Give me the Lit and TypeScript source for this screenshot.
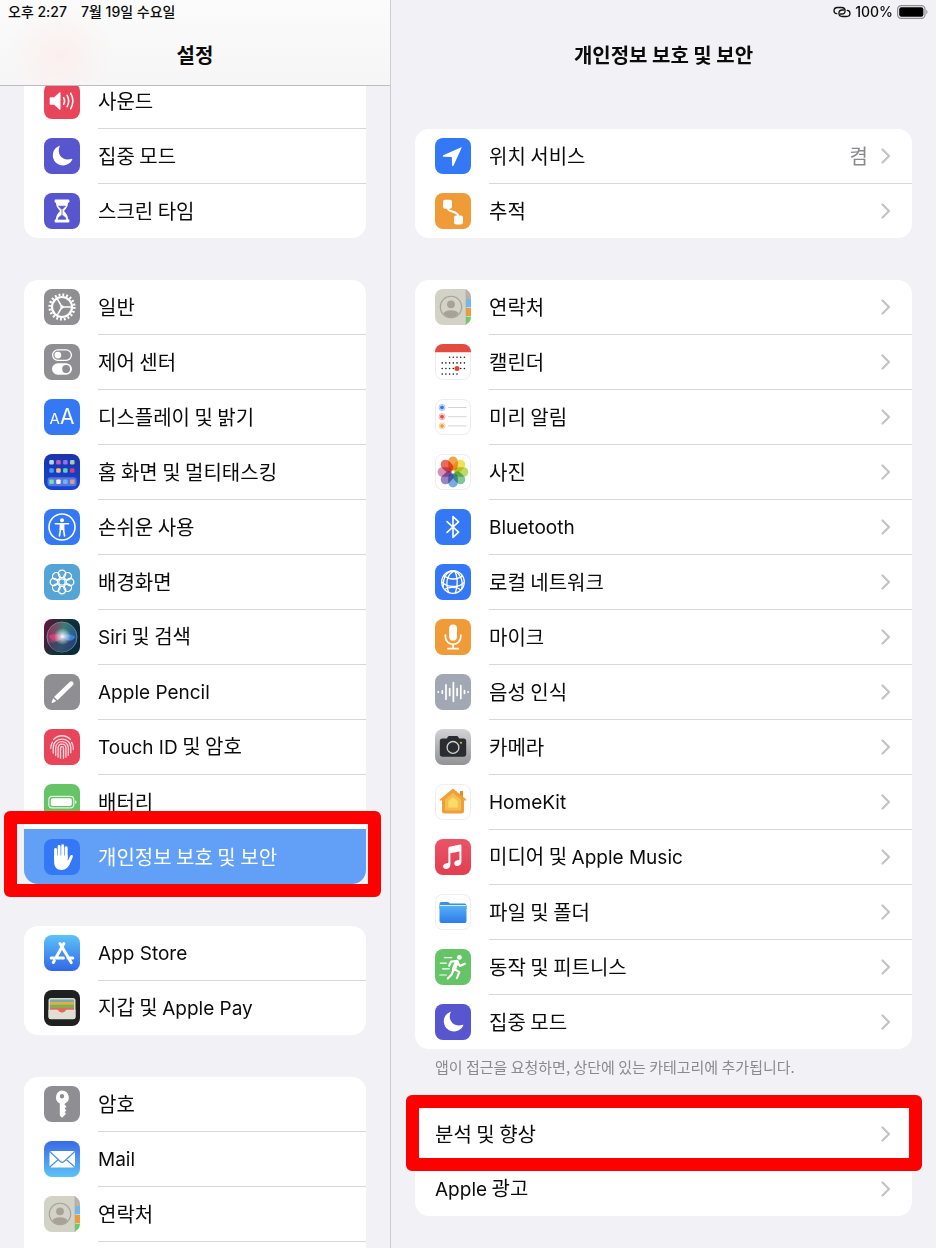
import { LitElement, html, svg, css, nothing } from "lit";
import type { SVGTemplateResult, TemplateResult } from "lit";
import { customElement, property } from "lit/decorators.js";
import { classMap } from "lit/directives/class-map.js";

const BLUE = "#3478f6";
const GRAY = "#8e8e93";
const RED = "#e8455a";
const ORANGE = "#ef9b38";
const GREEN = "#65c466";
const INDIGO = "#5856ce";

const tile = (fill: string) => svg`<rect width="36" height="36" rx="8" fill=${fill}></rect>`;
const whiteTile = svg`<rect x=".5" y=".5" width="35" height="35" rx="7.5" fill="#fff" stroke="#ededf0"></rect>`;

const gradient = (id: string, from: string, to: string) => svg`
  <defs><linearGradient id=${id} x1="0" y1="0" x2="0" y2="1">
    <stop offset="0" stop-color=${from}></stop><stop offset="1" stop-color=${to}></stop>
  </linearGradient></defs>`;

const around = (count: number, draw: (angle: number, index: number) => SVGTemplateResult) =>
  Array.from({ length: count }, (_, i) => draw((360 / count) * i, i));

const calendarDots = () => {
  const dots: SVGTemplateResult[] = [];
  for (let row = 0; row < 4; row++) {
    for (let col = 0; col < 7; col++) {
      if ((row === 0 && col < 2) || (row === 3 && col > 4)) continue;
      dots.push(svg`<circle cx=${7.2 + col * 3.7} cy=${13.3 + row * 5.6} r=".8" fill="#222"></circle>`);
    }
  }
  return dots;
};

const homeColors = [
  ["#bcd6f7", "#c05fae", "#9a6cf0", "#a9c9a0"],
  ["#3f9df5", "#f0c184", "#5fd0c0", "#d23c78"],
  ["#78dcb4", "#f4f4f8", "#6fb4f7", "#d79c8e"],
];
const petalColors = ["#f2962e", "#f3dc3a", "#b4d453", "#6cc08b", "#6a9fe0", "#8a72bd", "#cf7fb0", "#e85448"];

const icons: Record<string, SVGTemplateResult> = {
  sound: svg`${tile(RED)}
    <path d="M6.500 14.200h3.600l5.300-4.700c.6-.5 1.100-.3 1.100.4v16.200c0 .7-.5.9-1.100.4l-5.300-4.700H6.500c-.5 0-.8-.3-.8-.8v-6c0-.5.3-.8.8-.8z" fill="#fff"></path>
    <path d="M19.600 14.600q2 3.400 0 6.800M23.100 12.400q3.200 5.600 0 11.200M26.600 10.200q4.600 7.800 0 15.600" fill="none" stroke="#fff" stroke-width="1.500" stroke-linecap="round"></path>`,
  moon: svg`${tile(INDIGO)}
    <path d="M15.600 8.500c.4-.4 0-.9-.6-.6A10.200 10.200 0 1 0 28.300 21.500c.2-.6-.3-1-.8-.7-7.600 3.200-15.400-3.900-11.900-12.300z" fill="#fff"></path>`,
  hourglass: svg`${tile(INDIGO)}
    <path d="M11.600 6.500h12.800a1 1 0 0 1 1 1v1.300a1 1 0 0 1-1 1h-.3c-.3 4-2 6-4.100 8.200 2.100 2.200 3.800 4.200 4.100 8.200h.3a1 1 0 0 1 1 1v1.300a1 1 0 0 1-1 1H11.600a1 1 0 0 1-1-1v-1.300a1 1 0 0 1 1-1h.3c.3-4 2-6 4.100-8.200-2.100-2.200-3.800-4.200-4.100-8.200h-.3a1 1 0 0 1-1-1V7.500a1 1 0 0 1 1-1z" fill="#fff"></path>
    <path d="M14.600 13.200h6.800L18 16.600zM18 17v5.500M14 26.200c.6-2.300 2.300-3.300 4-3.700 1.700.4 3.400 1.400 4 3.700z" fill=${INDIGO} stroke=${INDIGO} stroke-width=".8"></path>`,
  gear: svg`${tile(GRAY)}
    <circle cx="18" cy="18" r="12.300" fill="none" stroke="#fff" stroke-width="2.600" stroke-dasharray="1.900 1.964"></circle>
    <circle cx="18" cy="18" r="10" fill="none" stroke="#fff" stroke-width="2.200"></circle>
    <path d="M18 18h9M18 18l-4.600-7.900M18 18l-4.600 7.900" stroke="#fff" stroke-width="1.500"></path>
    <circle cx="18" cy="18" r="1.700" fill="#fff"></circle>`,
  toggles: svg`${tile(GRAY)}
    <rect x="8.600" y="5.900" width="18.800" height="10.400" rx="5.200" fill="none" stroke="#fff" stroke-width="1.300"></rect>
    <circle cx="13.900" cy="11.100" r="3.400" fill="#fff"></circle>
    <rect x="8" y="19.200" width="20" height="11.600" rx="5.800" fill="#fff"></rect>
    <circle cx="22.100" cy="25" r="3.900" fill=${GRAY}></circle>`,
  display: svg`${tile(BLUE)}
    <text class="glyph" x="5.500" y="25.200" font-size="15">A</text><text class="glyph" x="16" y="25.200" font-size="21">A</text>`,
  home: svg`${gradient("g-home", "#1b33a8", "#1746d8")}${tile("url(#g-home)")}
    <rect x="3.500" y="23.200" width="29" height="9" rx="3" fill="#fff" opacity=".28"></rect>
    ${homeColors.map((row, y) => row.map((c, x) => svg`<rect x=${5.3 + x * 6.9} y=${[6, 14.3, 25.4][y]} width="4.500" height="4.500" rx="1.200" fill=${c}></rect>`))}`,
  accessibility: svg`${tile(BLUE)}
    <circle cx="18" cy="18" r="13" fill="none" stroke="#fff" stroke-width="1.600"></circle>
    <circle cx="18" cy="11.200" r="2" fill="#fff"></circle>
    <path d="M11.400 14.800h13.200M16.700 19.500l-1.300 7.500M19.300 19.500l1.300 7.500" fill="none" stroke="#fff" stroke-width="1.600" stroke-linecap="round"></path>
    <path d="M15.600 14.500h4.800v6.500h-4.800z" fill="#fff"></path>`,
  wallpaper: svg`${tile("#55a4d6")}
    <g fill="none" stroke="#fff" stroke-width="1.300">
      ${around(8, (a) => svg`<circle cx="18" cy="9.900" r="3.700" transform="rotate(${a} 18 18)"></circle>`)}
      ${around(8, (a) => svg`<path d="M18 14v-2.500" transform="rotate(${a + 22.5} 18 18)"></path>`)}
      <circle cx="18" cy="18" r="3.200"></circle>
    </g>`,
  siri: svg`<defs>
      <linearGradient id="g-siri" x1="0" y1="0" x2="1" y2=".4"><stop offset="0" stop-color="#6b1440"></stop><stop offset=".55" stop-color="#123334"></stop><stop offset="1" stop-color="#0b2a3c"></stop></linearGradient>
      <linearGradient id="g-orb" x1="0" y1=".4" x2="1" y2=".6"><stop offset="0" stop-color="#c92a68"></stop><stop offset=".5" stop-color="#4d9c90"></stop><stop offset="1" stop-color="#2468c8"></stop></linearGradient>
      <radialGradient id="g-glow"><stop offset="0" stop-color="#fff"></stop><stop offset=".3" stop-color="#e8f4ff" stop-opacity=".7"></stop><stop offset="1" stop-color="#fff" stop-opacity="0"></stop></radialGradient>
    </defs>${tile("url(#g-siri)")}
    <circle cx="18" cy="18" r="15" fill="url(#g-orb)" opacity=".7" stroke="#9aa8b4" stroke-width="1"></circle>
    <path d="M5 23c5 2 9-1 14-4 5-2 9-1 13 1-1 7-7 13-14 13S6 29 5 23z" fill="#252c60" opacity=".5"></path>
    <path d="M5 17c5-4 10-2 14 1-3 5-11 6-14-1z" fill="#e0417f" opacity=".75"></path>
    <path d="M31 18c-4-4-9-3-12-1 3 5 9 7 12 1z" fill="#4a92e8" opacity=".75"></path>
    <circle cx="18.500" cy="17.500" r="8.500" fill="url(#g-glow)"></circle>`,
  pencil: svg`${tile(GRAY)}
    <path d="M26.200 7.600a2.300 2.300 0 0 1 3.100 3.200L13.500 26.300l-3.500-3.200z" fill="#fff"></path>
    <path d="M9.100 24.200l3.200 2.900-3.700 1.900c-.7.3-1.200-.2-.9-.9z" fill="#fff"></path>`,
  touch: svg`${tile(RED)}
    <g fill="none" stroke="#fbd9de" stroke-width="1.300" stroke-linecap="round">
      <path d="M9.500 10.500c4.600-5 12.400-5 17 0M6.700 19.500c0-2.600.6-4.600 1.700-6.200"></path>
      <path d="M9.200 24v-5.200c0-11.600 17.600-11.600 17.600 0v5M29.300 20.500c.1-3-.4-5.300-1.700-7.200"></path>
      <path d="M11.700 26.400v-7.300c0-8.600 12.600-8.600 12.600 0v7.300"></path>
      <path d="M14.100 28.200v-9c0-5.400 7.800-5.400 7.800 0v9"></path>
      <path d="M16.500 29.300V19.200c0-2 3-2 3 0v10.100"></path>
    </g>`,
  battery: svg`${tile(GREEN)}
    <rect x="4.800" y="12.300" width="25" height="11.600" rx="3.400" fill="none" stroke="#fff" stroke-width="1.200" opacity=".8"></rect>
    <rect x="6.800" y="14.200" width="21" height="7.800" rx="1.800" fill="#fff"></rect>
    <path d="M31.200 16.200c1.700.7 1.700 3.100 0 3.800z" fill="#fff"></path>`,
  hand: svg`${tile(BLUE)}
    <path d="M11.600 20V10.400M15.100 18V7.400M18.700 18V6.800M22.200 19V8.800" stroke="#fff" stroke-width="2.900" stroke-linecap="round"></path>
    <path d="M10.150 16.500h13.500v5.200c1.300-1.600 1.700-3.900 2.800-5.200.8-.9 2.600-.4 2.400.9-.2 1.500-1.700 4.100-2.700 6.700-1.500 4.200-4.200 6.900-8.600 6.900-5 0-7.400-3.400-7.400-8z" fill="#fff"></path>`,
  appstore: svg`${gradient("g-store", "#5cc2f8", "#3267e8")}${tile("url(#g-store)")}
    <g fill="none" stroke="#fff" stroke-width="3" stroke-linecap="round">
      <path d="M19.900 8.600l-7.300 12.900M16 8.600l11.200 19M7.200 23h12.200M24 23h4.800M10.300 25.700l-1 1.800"></path>
    </g>`,
  wallet: svg`${tile("#1f2120")}
    <rect x="4.500" y="8" width="27" height="21" rx="2.500" fill="#d9d7cc"></rect>
    <rect x="6" y="9.600" width="24" height="7" rx="1.400" fill="#7aa9b5"></rect>
    <rect x="6" y="12" width="24" height="6" fill="#dcb23f"></rect>
    <rect x="6" y="14.700" width="24" height="5" fill="#86ab55"></rect>
    <path d="M6 18h24v2h-6.500c-1.300 0-1.700.5-2.300 1.300-1.500 2-4.900 2-6.400 0-.6-.8-1-1.300-2.300-1.300H6z" fill="#e4695c"></path>
    <path d="M4.500 19.800h7.800c1.300 0 1.800.5 2.500 1.400 1.500 1.900 4.900 1.900 6.400 0 .7-.9 1.200-1.400 2.500-1.400h7.800v7a2.500 2.500 0 0 1-2.500 2.500H7a2.500 2.500 0 0 1-2.500-2.500z" fill="#e1ded3"></path>`,
  key: svg`${tile(GRAY)}
    <path fill-rule="evenodd" d="M18 4.600a6.900 6.900 0 0 1 2.700 13.200v.9l1.800 1.800-1.800 2.100 1.600 1.700-1.600 1.900 1.300 1.600-3.300 3.400c-.4.4-.8.4-1.200 0l-1.700-1.800V17.600A6.900 6.900 0 0 1 18 4.600zm0 3.400a2.200 2.200 0 1 0 0 4.400 2.200 2.200 0 0 0 0-4.400z" fill="#fff"></path>`,
  mail: svg`${gradient("g-mail", "#3a6ae6", "#5cc3f7")}${tile("url(#g-mail)")}
    <rect x="5.500" y="10" width="25.500" height="16.500" rx="2" fill="#fff"></rect>
    <path d="M6 10.800l10.300 9.700c1.100 1 2.700 1 3.800 0L30.500 10.800M6 25.800l8.300-7.300M30.500 25.800l-8.300-7.300" fill="none" stroke="#4b90ee" stroke-width="1.200"></path>`,
  contacts: svg`
    <path d="M28 0a8 8 0 0 1 8 8v2H29V0z" fill="#b5b3ab"></path>
    <path d="M29 10h7v8.500h-7z" fill="#6fb7ec"></path><path d="M29 19h7v8h-7z" fill="#ef9a38"></path>
    <path d="M29 27.500h7V28a8 8 0 0 1-7 8z" fill="#68cb6c"></path>
    <path d="M8 0h23v36H8a8 8 0 0 1-8-8V8a8 8 0 0 1 8-8z" fill="#d3d2c6"></path>
    <circle cx="16" cy="18" r="10.700" fill="none" stroke="#a6a297" stroke-width="1.100"></circle>
    <circle cx="16" cy="15.300" r="3.900" fill="#a6a297"></circle>
    <path d="M8.200 24.600c1.600-2.600 4.500-3.300 7.800-3.300s6.200.7 7.800 3.300c-3.600 4.800-12 4.800-15.600 0z" fill="#a6a297"></path>
    <path d="M31 0v36" stroke="#a9a89e" stroke-width=".6"></path>`,
  location: svg`${tile(BLUE)}<path d="M26.300 9.300L8.300 17.200c-.9.400-.8 1.400.2 1.500l8.300.3.300 8.300c.1 1 1.200 1.200 1.500.2l8-17.700c.2-.5-.1-.7-.3-.5z" fill="#fff"></path>`,
  tracking: svg`${tile(ORANGE)}
    <rect x="8" y="6.700" width="9" height="9" rx="2.200" fill="#fff"></rect>
    <rect x="19" y="22.500" width="9" height="9" rx="2.200" fill="#fff"></rect>
    <path d="M12.600 15c.2 4.500 9.600 2.500 10.800 8" fill="none" stroke="#fff" stroke-width="2"></path>`,
  calendar: svg`${whiteTile}<path d="M8 0h20a8 8 0 0 1 8 8v.3H0V8a8 8 0 0 1 8-8z" fill="#e34b40"></path>
    ${calendarDots()}<circle cx="22" cy="24.500" r="2.500" fill="#e0453c"></circle>`,
  reminders: svg`${whiteTile}
    ${[BLUE, "#e0504a", "#eda03f"].map((c, i) => svg`
      <circle cx="7" cy=${8.5 + i * 9.2} r="3" fill="none" stroke=${c} stroke-width=".8" opacity=".6"></circle>
      <circle cx="7" cy=${8.5 + i * 9.2} r="2" fill=${c}></circle>
      <path d="M13 ${8.5 + i * 9.2}h18.500" stroke="#c9c9cd" stroke-width=".8"></path>`)}`,
  photos: svg`${whiteTile}
    ${petalColors.map((c, i) => svg`<rect class="petal" x="13.200" y="2.600" width="9.600" height="14" rx="4.800" fill=${c} opacity=".88" transform="rotate(${i * 45} 18 18)"></rect>`)}`,
  bluetooth: svg`${tile(BLUE)}
    <path d="M12 12.600l11.600 10.600L18 28.400V7.600l5.600 5.200L12 23.400" fill="none" stroke="#fff" stroke-width="1.600" stroke-linecap="round" stroke-linejoin="round"></path>`,
  network: svg`${tile(BLUE)}
    <g fill="none" stroke="#fff" stroke-width="1.300">
      <circle cx="18" cy="18" r="11.300"></circle>
      <path d="M19.500 6.800c-8 3.400-9.500 13.700-5.500 22M19.500 6.800c3 4.500 4 14 .8 22.400M19.500 6.800C24 9 29 15 26.500 25.300M19.500 6.800C12 7 8 13 8.200 23"></path>
      <path d="M9 11.500c5 4.500 13.500 4.700 18.400.3M6.700 18c6 5.800 16.500 6 22.500.4M9.500 25.500c4-2.800 12.500-2.800 16.600.4"></path>
    </g>`,
  mic: svg`${tile(ORANGE)}
    <rect x="14.200" y="5.600" width="7.800" height="16" rx="3.900" fill="#fff"></rect>
    <path d="M10.400 16v1.600c0 10.200 15.400 10.200 15.400 0V16M18.100 25.400v4M13 29.700h10.200" fill="none" stroke="#fff" stroke-width="1.700" stroke-linecap="round"></path>`,
  speech: svg`${tile("#a2a8b3")}
    <path d="M3.300 17.800v.4M7.300 16.800v2.400M11 10.800v14.400M14.700 14.600v6.800M18.400 8.700v18.600M22.100 14.600v6.800M25.800 11.600v12.800M29.500 16.600v2.800M33.100 17.800v.4" stroke="#fff" stroke-width="1.700" stroke-linecap="round"></path>`,
  camera: svg`${gradient("g-cam", "#d3d3d5", "#929297")}${tile("url(#g-cam)")}
    <path d="M7.500 9.600H12c.6-2 1.400-2.600 2.800-2.600h6.400c1.400 0 2.200.6 2.800 2.600h4.500A2.700 2.700 0 0 1 31.200 12.300V25a2.700 2.700 0 0 1-2.700 2.700h-21A2.700 2.700 0 0 1 4.800 25V12.300a2.700 2.700 0 0 1 2.700-2.700z" fill="#2b2c2f"></path>
    <circle cx="18" cy="18.400" r="5.900" fill="none" stroke="#d0d0d2" stroke-width="1.300"></circle>
    <circle cx="26" cy="13.800" r="1" fill="#e9c745"></circle>`,
  homekit: svg`${whiteTile}
    <path d="M24.800 7h3.200v7h-3.200z" fill="#e08a34"></path>
    <path d="M18 4.500l13 10.700c.7.600.3 1.400-.4 1.400H29V27a2.500 2.500 0 0 1-2.500 2.500h-17A2.500 2.500 0 0 1 7 27V16.600H5.400c-.7 0-1.100-.8-.4-1.400z" fill="#ee9f3c"></path>
    <path d="M18 9l8 6.500V25a1.500 1.500 0 0 1-1.500 1.500h-13A1.500 1.500 0 0 1 10 25v-9.500z" fill="#f5bd4c"></path>
    <path d="M18 13.200l4.700 3.800v6.500h-9.400V17z" fill="#fbdb6a"></path>`,
  music: svg`${gradient("g-music", "#ea5468", "#e23e50")}${tile("url(#g-music)")}
    <path d="M13.400 9.300c0-.9.400-1.300 1.200-1.500l10.600-2.200c.8-.2 1.200.2 1.200.9v16.200c0 2.500-1.700 4-3.800 4.300-3.900.5-4.700-4.600-.9-5.500l1.800-.4c.7-.2.900-.5.900-1.100v-7.600l-9 1.900v11.200c0 2.700-1.700 4.200-3.900 4.500-3.900.5-4.700-4.500-.8-5.500l1.700-.4c.8-.2 1-.5 1-1.100z" fill="#fff"></path>`,
  files: svg`${gradient("g-files", "#56b0f6", "#2f7bea")}${whiteTile}
    <path d="M4.500 10a2 2 0 0 1 2-2h6c1.500 0 1.800 1.500 3 1.500h14a2 2 0 0 1 2 2V15h-27z" fill="#3a90dc"></path>
    <path d="M4.500 11.700h27v15.300a2 2 0 0 1-2 2h-23a2 2 0 0 1-2-2z" fill="url(#g-files)"></path>
    <path d="M5 11.500h26" stroke="#d9effd" stroke-width="1"></path>`,
  fitness: svg`${tile(GREEN)}
    <circle cx="24.400" cy="8.400" r="2.400" fill="#fff"></circle>
    <g fill="none" stroke="#fff" stroke-linecap="round" stroke-linejoin="round">
      <path d="M21.800 13l-2.800 7" stroke-width="4.200"></path>
      <path d="M21 12l-5 .6-1.800 4.200M22.600 13l2.300 4 4.900-2.300M20 20.300l4.300 2.800-2.400 6M18.600 20.500l-1.700 4.700-4.100 4.300" stroke-width="2.200"></path>
      <path d="M9.300 8.600h7.500M5.300 14.200h6M7.500 19.800h6.800M4.800 26h6.500" stroke-width="1.200"></path>
    </g>`,
};

interface Item {
  icon?: string;
  label: string;
  value?: string;
  selected?: boolean;
  marked?: boolean;
}

/** Rounded list of settings rows; the list can run on above or below the visible part. */
@customElement("settings-group")
class SettingsGroup extends LitElement {
  @property({ attribute: false }) items: Item[] = [];
  @property({ type: Boolean }) chevrons = false;
  @property({ type: Boolean }) above = false;
  @property({ type: Boolean }) below = false;

  static styles = css`
    :host { display: block; }
    .group { list-style: none; margin: 0; padding: 0; background: #fff; border-radius: 14px; }
    .group.above { border-radius: 0 0 14px 14px; }
    .group.below { border-radius: 14px 14px 0 0; }
    .group.below::after { content: ""; display: block; height: 54px; margin-left: 74px; border-top: 1px solid #d8d8db; }
    .item { position: relative; }
    .row {
      display: flex; align-items: center; gap: 18px; width: 100%;
      margin: 0; padding: 0 0 0 20px; border: 0; background: none;
      color: #0b0b0c; text-align: left; cursor: pointer;
      font: 400 20px/28px "Noto Sans CJK KR", sans-serif;
    }
    .icon { flex: none; width: 36px; height: 36px; display: block; }
    .glyph { font-family: Inter, sans-serif; font-weight: 400; fill: #fff; }
    .petal { mix-blend-mode: multiply; }
    .body {
      flex: 1; min-width: 0; display: flex; align-items: center; gap: 12px;
      min-height: 54px; padding-right: 20px;
    }
    .item + .item .body { border-top: 1px solid #d8d8db; }
    .label { flex: 1; min-width: 0; white-space: nowrap; }
    .latin { font-family: Inter, sans-serif; font-size: 19px; }
    .value { color: #8a8a8e; }
    .chevron { flex: none; width: 12px; height: 18px; display: block; }
    .item .selected { background: #62a0f8; color: #fff; border-radius: 0 0 14px 14px; }
    .item + .item .selected .body { border-top-color: transparent; }
    .mark {
      position: absolute; z-index: 1; box-sizing: border-box; pointer-events: none;
      border: 13px solid #fe0000; border-radius: 6px; inset: -12px -10px -10px -9px;
    }
    .selected + .mark { inset: -18px -15px -13px -20px; }
  `;

  private label(text: string): TemplateResult[] {
    return text
      .split(/([A-Za-z]+(?: [A-Za-z]+)*)/)
      .filter(Boolean)
      .map((part) => (/^[A-Za-z]/.test(part) ? html`<span class="latin">${part}</span>` : html`${part}`));
  }

  render() {
    return html`<ul class=${classMap({ group: true, above: this.above, below: this.below })}>
      ${this.items.map((item) => html`<li class="item">
        <button type="button" class=${classMap({ row: true, selected: !!item.selected })} aria-current=${item.selected ? "page" : nothing}>
          ${item.icon ? html`<svg class="icon" viewBox="0 0 36 36" aria-hidden="true">${icons[item.icon]}</svg>` : nothing}
          <span class="body">
            <span class="label">${this.label(item.label)}</span>
            ${item.value ? html`<span class="value">${item.value}</span>` : nothing}
            ${this.chevrons ? html`<svg class="chevron" viewBox="0 0 12 18" aria-hidden="true"><path d="M2.500 2.500L9 9l-6.500 6.500" fill="none" stroke="#c3c3c6" stroke-width="2.200" stroke-linecap="round" stroke-linejoin="round"></path></svg>` : nothing}
          </span>
        </button>
        ${item.marked ? html`<span class="mark"></span>` : nothing}
      </li>`)}
    </ul>`;
  }
}

const sidebar: Item[][] = [
  [
    { icon: "sound", label: "사운드" },
    { icon: "moon", label: "집중 모드" },
    { icon: "hourglass", label: "스크린 타임" },
  ],
  [
    { icon: "gear", label: "일반" },
    { icon: "toggles", label: "제어 센터" },
    { icon: "display", label: "디스플레이 및 밝기" },
    { icon: "home", label: "홈 화면 및 멀티태스킹" },
    { icon: "accessibility", label: "손쉬운 사용" },
    { icon: "wallpaper", label: "배경화면" },
    { icon: "siri", label: "Siri 및 검색" },
    { icon: "pencil", label: "Apple Pencil" },
    { icon: "touch", label: "Touch ID 및 암호" },
    { icon: "battery", label: "배터리" },
    { icon: "hand", label: "개인정보 보호 및 보안", selected: true, marked: true },
  ],
  [
    { icon: "appstore", label: "App Store" },
    { icon: "wallet", label: "지갑 및 Apple Pay" },
  ],
  [
    { icon: "key", label: "암호" },
    { icon: "mail", label: "Mail" },
    { icon: "contacts", label: "연락처" },
  ],
];

const services: Item[] = [
  { icon: "location", label: "위치 서비스", value: "켬" },
  { icon: "tracking", label: "추적" },
];

const permissions: Item[] = [
  { icon: "contacts", label: "연락처" },
  { icon: "calendar", label: "캘린더" },
  { icon: "reminders", label: "미리 알림" },
  { icon: "photos", label: "사진" },
  { icon: "bluetooth", label: "Bluetooth" },
  { icon: "network", label: "로컬 네트워크" },
  { icon: "mic", label: "마이크" },
  { icon: "speech", label: "음성 인식" },
  { icon: "camera", label: "카메라" },
  { icon: "homekit", label: "HomeKit" },
  { icon: "music", label: "미디어 및 Apple Music" },
  { icon: "files", label: "파일 및 폴더" },
  { icon: "fitness", label: "동작 및 피트니스" },
  { icon: "moon", label: "집중 모드" },
];

const reports: Item[] = [{ label: "분석 및 향상", marked: true }, { label: "Apple 광고" }];

@customElement("app-root")
class AppRoot extends LitElement {
  static styles = css`
    :host {
      display: grid; grid-template-columns: minmax(0, 5fr) minmax(0, 7fr);
      height: 100vh; overflow: hidden; background: #f1f1f6; color: #0b0b0c;
      font-family: "Noto Sans CJK KR", sans-serif;
    }
    .pane { display: flex; flex-direction: column; min-height: 0; overflow: hidden; }
    .detail { border-left: 1px solid #cdcdd2; }
    .header { flex: none; position: relative; z-index: 2; border-bottom: 1px solid transparent; }
    .sidebar .header {
      background: radial-gradient(circle at 60px 56px, rgba(253, 236, 233, .7), rgba(253, 240, 238, 0) 52px), linear-gradient(#fbfbfb, #f6f6f7);
      border-bottom-color: #bdbdc0;
    }
    .status { display: flex; align-items: center; height: 24px; padding: 0 8px; font: 500 14px/24px Inter, "Noto Sans CJK KR", sans-serif; }
    .left { gap: 14px; }
    .right { justify-content: flex-end; gap: 4px; }
    .link { width: 18px; height: 12px; }
    .power { width: 31px; height: 14px; }
    .title { margin: 0; text-align: center; font-size: 20px; font-weight: 600; line-height: 61px; }
    .content { flex: 1; min-height: 0; overflow: hidden; display: flex; flex-direction: column; gap: 42px; padding: 43px 24px 32px; }
    .content > * { flex: none; }
    .sidebar .content { padding-top: 0; }
    .scrolled { margin-top: -12px; }
    .note { margin: 8px 0 0; padding: 0 20px; font-size: 15px; line-height: 20px; color: #8a8a8e; }
    .reports { margin-top: -12px; }
  `;

  render() {
    return html`
      <nav class="pane sidebar" aria-label="설정">
        <header class="header">
          <div class="status left"><span>오후 2:27</span><span>7월 19일 수요일</span></div>
          <h2 class="title">설정</h2>
        </header>
        <div class="content">
          ${sidebar.map((items, i) => html`<settings-group class=${classMap({ scrolled: i === 0 })} .items=${items} ?above=${i === 0} ?below=${i === sidebar.length - 1}></settings-group>`)}
        </div>
      </nav>
      <main class="pane detail">
        <header class="header">
          <div class="status right">
            <svg class="link" viewBox="0 0 18 12" fill="none" stroke="#111" stroke-width="1.300" stroke-linecap="round" aria-hidden="true">
              <path d="M3.800 7.700C2 7.500 1 6.300 1 4.700 1 2.800 2.500 1.500 4.500 1.500h4c2.200 0 3.600 1.300 3.600 3.200S10.700 8 8.700 8H7.300"></path>
              <path d="M14.200 4.300C16 4.500 17 5.700 17 7.300c0 1.900-1.500 3.200-3.500 3.200h-4c-2.200 0-3.600-1.300-3.600-3.200S7.300 4 9.300 4h1.400"></path>
            </svg>
            <span>100%</span>
            <svg class="power" viewBox="0 0 31 14" aria-hidden="true">
              <rect x=".6" y=".6" width="27.400" height="12.800" rx="3.600" fill="none" stroke="#8e8e93" stroke-width="1.200"></rect>
              <rect x="2.200" y="2.200" width="24.200" height="9.600" rx="2.200" fill="#000"></rect>
              <path d="M29.300 4.800c1.600.8 1.600 3.600 0 4.400z" fill="#8e8e93"></path>
            </svg>
          </div>
          <h1 class="title">개인정보 보호 및 보안</h1>
        </header>
        <div class="content">
          <settings-group .items=${services} chevrons></settings-group>
          <section>
            <settings-group .items=${permissions} chevrons></settings-group>
            <p class="note">앱이 접근을 요청하면, 상단에 있는 카테고리에 추가됩니다.</p>
          </section>
          <settings-group class="reports" .items=${reports} chevrons></settings-group>
        </div>
      </main>`;
  }
}
